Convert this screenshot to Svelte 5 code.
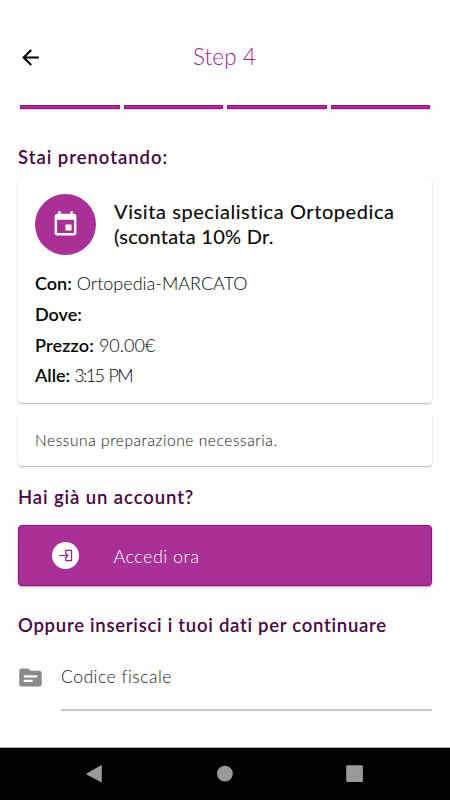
<script>
  const steps = [1, 2, 3, 4];
  const details = [
    { label: 'Con:', value: 'Ortopedia-MARCATO', id: 'con' },
    { label: 'Dove:', value: '', id: 'dove' },
    { label: 'Prezzo:', value: '90.00€', id: 'prezzo' },
    { label: 'Alle:', value: '3:15 PM', id: 'alle' }
  ];
</script>

<div class="screen">
  <header>
    <svg class="back" viewBox="0 0 24 24"><path d="M20 11H7.83l5.59-5.59L12 4l-8 8 8 8 1.41-1.41L7.83 13H20v-2z" /></svg>
    <h1><span class="step">Step 4</span></h1>
  </header>

  <div class="progress">
    {#each steps as step (step)}<i></i>{/each}
  </div>

  <main>
    <h2 class="booking"><span>Stai prenotando:</span></h2>

    <section class="card visit">
      <div class="top">
        <div class="avatar">
          <svg viewBox="0 0 24 24"><path d="M17 12h-5v5h5v-5zM16 1v2H8V1H6v2H5c-1.11 0-1.99.9-1.99 2L3 19c0 1.1.89 2 2 2h14c1.1 0 2-.9 2-2V5c0-1.1-.9-2-2-2h-1V1h-2zm3 18H5V8h14v11z" /></svg>
        </div>
        <p class="title"><span class="t1">Visita specialistica Ortopedica</span><br /><span class="t2">(scontata 10% Dr.</span></p>
      </div>
      <div class="details">
        {#each details as d (d.id)}
          <div class="row {d.id}"><b>{d.label}</b><span>{d.value}</span></div>
        {/each}
      </div>
    </section>

    <section class="card note"><span>Nessuna preparazione necessaria.</span></section>

    <h2 class="account"><span>Hai già un account?</span></h2>

    <button type="button">
      <span class="badge">
        <svg viewBox="0 0 26 26"><path d="M6.8 13h8.4M12.6 10.3l2.7 2.7-2.7 2.7M13.4 10V8h5.4v10h-5.4v-2" /></svg>
      </span>
      <span class="login">Accedi ora</span>
    </button>

    <h2 class="data"><span>Oppure inserisci i tuoi dati per continuare</span></h2>

    <div class="field">
      <svg viewBox="0 0 24 24"><path d="M20 6h-8l-2-2H4c-1.1 0-1.99.9-1.99 2L2 18c0 1.1.9 2 2 2h16c1.1 0 2-.9 2-2V8c0-1.1-.9-2-2-2zm-6 10H6v-2h8v2zm4-4H6v-2h12v2z" /></svg>
      <div class="input"><span>Codice fiscale</span></div>
    </div>
  </main>

  <nav>
    <svg viewBox="0 0 450 52">
      <path d="M86.6 25.5 101 17.2q.8-.4.8.5v16.1q0 .9-.8.5L86.6 26.4q-.8-.5 0-.9z" />
      <circle cx="224.9" cy="25.6" r="7.9" />
      <rect x="346.2" y="17.2" width="16.7" height="16.7" rx="1" />
    </svg>
  </nav>
</div>

<style>
  :global(body) { margin: 0; background: #fefefe; }
  .screen {
    width: 450px; height: 800px; overflow: hidden; box-sizing: border-box;
    display: flex; flex-direction: column; background: #fefefe; color: #050505;
    font-family: Lato, "Open Sans", sans-serif; font-variant-ligatures: none;
  }
  header { display: flex; align-items: center; height: 86px; box-sizing: border-box; padding: 28px 18px 0; }
  .back { width: 25px; height: 25px; fill: #000; }
  h1 { flex: 1; margin: 0 26px 0 0; text-align: center; font-weight: 300; font-size: 22.5px; line-height: 30px; color: #a01c90; }
  .step { letter-spacing: .1px; }
  .progress { display: flex; gap: 4px; margin: 19px 20px 0; height: 4px; }
  .progress i { flex: 1; box-sizing: border-box; background: #a83096; border: 1px solid #9c0c88; box-shadow: 0 1px #efd0eb; }
  main { flex: 1; padding: 0 18px; display: flex; flex-direction: column; }
  h2 { margin: 0; font-size: 18.5px; line-height: 24px; font-weight: 600; color: #48063f; white-space: nowrap; }
  .booking { margin-top: 36px; letter-spacing: .97px; }
  .card { background: #fff; border-radius: 4px; box-shadow: 0 1px 1.5px rgba(0,0,0,.28), 0 0 1px rgba(0,0,0,.08); box-sizing: border-box; padding: 0 17px; }
  .visit { margin-top: 8px; height: 226px; padding-top: 17px; }
  .top { display: flex; gap: 18px; height: 61px; align-items: center; }
  .avatar { width: 61px; height: 61px; flex: none; border-radius: 50%; background: #a83096; display: flex; align-items: center; justify-content: center; }
  .avatar svg { width: 29px; height: 29px; fill: #fff; }
  .title { margin: 0 0 2px; font-size: 20px; line-height: 25px; font-weight: 400; -webkit-text-stroke: .1px #050505; white-space: nowrap; }
  .t1 { letter-spacing: .59px; }
  .t2 { letter-spacing: .27px; }
  .details { margin-top: 13px; }
  .row { display: flex; gap: 5px; height: 30.7px; align-items: center; font-size: 18px; line-height: 24px; font-weight: 300; white-space: nowrap; }
  .row b { font-weight: 600; }
  .prezzo b { letter-spacing: .15px; }
  .alle { gap: 4px; }
  .alle span { letter-spacing: -1.6px; word-spacing: 1.8px; }
  .note { margin-top: 10px; height: 53px; display: flex; align-items: center; font-size: 15.5px; font-weight: 300; color: #111; letter-spacing: .57px; }
  .account { margin-top: 19px; letter-spacing: .9px; }
  button {
    margin-top: 16px; height: 61px; border: 1px solid #9c0c88; border-radius: 4px; background: #a83096; color: #fff;
    display: flex; align-items: center; padding: 0 33px; font: 300 18px/24px Lato, sans-serif; box-shadow: 0 1px 2px rgba(0,0,0,.35);
  }
  .login { letter-spacing: .45px; }
  .badge { width: 27px; height: 27px; border-radius: 50%; background: #fff; margin-right: 34.5px; }
  .badge svg { display: block; width: 27px; height: 27px; fill: none; stroke: #a01c90; stroke-width: 1.2; stroke-linejoin: round; }
  .data { margin-top: 27px; letter-spacing: .73px; }
  .field { display: flex; margin-top: 22px; }
  .field svg { width: 27px; height: 27px; margin: 5px 17px 0 -1px; fill: #8a8a8a; flex: none; }
  .input { flex: 1; height: 50px; border-bottom: 2px solid #c6c6c6; font-size: 17.5px; line-height: 36px; font-weight: 300; color: #222; letter-spacing: .5px; }
  nav { height: 52px; background: #000; box-shadow: 0 -1px #aaa; }
  nav svg { display: block; width: 450px; height: 52px; fill: #999; }
</style>
